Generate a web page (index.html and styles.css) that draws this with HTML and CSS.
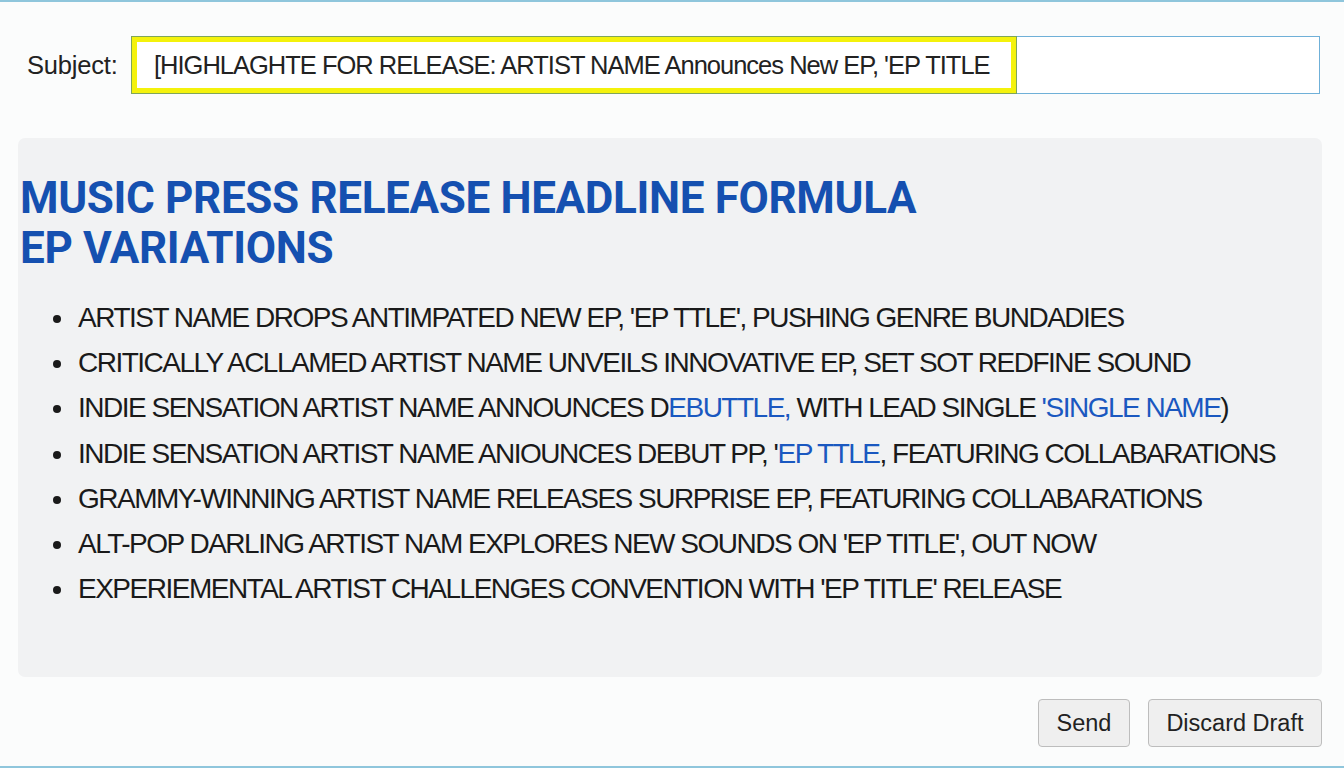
FILE: index.html
```html
<!DOCTYPE html>
<html lang="en">
<head>
<meta charset="utf-8">
<title>Compose</title>
<link rel="stylesheet" href="styles.css">
</head>
<body>
<div class="compose">
  <div class="subject-row">
    <label class="subject-label" for="subject">Subject:</label>
    <div class="subject-field" id="subject">
      <span class="subject-highlight">[HIGHLAGHTE FOR RELEASE: ARTIST NAME Announces New EP, 'EP TITLE</span>
    </div>
  </div>

  <section class="panel">
    <h1 class="panel-title">MUSIC PRESS RELEASE HEADLINE FORMULA<br>EP VARIATIONS</h1>
    <ul class="headline-list">
      <li>ARTIST NAME DROPS ANTIMPATED NEW EP, 'EP TTLE', PUSHING GENRE BUNDADIES</li>
      <li>CRITICALLY ACLLAMED ARTIST NAME UNVEILS INNOVATIVE EP, SET SOT REDFINE SOUND</li>
      <li>INDIE SENSATION ARTIST NAME ANNOUNCES D<span class="hl">EBUTTLE,</span> WITH LEAD SINGLE <span class="hl">'SINGLE NAME</span>)</li>
      <li>INDIE SENSATION ARTIST NAME ANIOUNCES DEBUT PP, '<span class="hl">EP TTLE</span>, FEATURING COLLABARATIONS</li>
      <li>GRAMMY-WINNING ARTIST NAME RELEASES SURPRISE EP, FEATURING COLLABARATIONS</li>
      <li>ALT-POP DARLING ARTIST NAM EXPLORES NEW SOUNDS ON 'EP TITLE', OUT NOW</li>
      <li>EXPERIEMENTAL ARTIST CHALLENGES CONVENTION WITH 'EP TITLE' RELEASE</li>
    </ul>
  </section>

  <div class="actions">
    <button class="btn" type="button">Send</button>
    <button class="btn" type="button">Discard Draft</button>
  </div>
</div>
</body>
</html>
```

FILE: styles.css
```css
html, body {
  margin: 0;
  padding: 0;
}

body {
  width: 1344px;
  height: 768px;
  box-sizing: border-box;
  background: #fbfcfc;
  border-top: 2px solid #8fc6dc;
  border-bottom: 2px solid #8fc6dc;
  font-family: "Liberation Sans", Arial, sans-serif;
  color: #1c1c1c;
  overflow: hidden;
}

.compose {
  display: flex;
  flex-direction: column;
  padding: 0 22px 0 18px;
}

.subject-row {
  display: flex;
  align-items: center;
  margin-top: 34px;
  padding-left: 9px;
}

.subject-label {
  font-family: "Liberation Sans", Arial, sans-serif;
  font-size: 25.5px;
  letter-spacing: -0.2px;
  color: #222;
  width: 104px;
}

.subject-field {
  flex: 1;
  height: 56px;
  border: 1px solid #6fb0d8;
  background: #fff;
  display: flex;
  align-items: stretch;
  margin-right: 2px;
}

.subject-highlight {
  display: flex;
  align-items: center;
  width: 884px;
  box-sizing: border-box;
  border: 5px solid #f4f20c;
  outline: 1px solid #7fa65a;
  padding-left: 17px;
  font-family: "Liberation Sans", Arial, sans-serif;
  font-size: 25.5px;
  letter-spacing: -1px;
  color: #222;
  white-space: nowrap;
}

.panel {
  margin-top: 44px;
  height: 539px;
  background: #f1f2f3;
  border-radius: 7px;
  padding: 35px 0 0 2px;
  box-sizing: border-box;
}

.panel-title {
  margin: 0;
  font-family: Roboto, "Liberation Sans", sans-serif;
  font-weight: 700;
  font-size: 44px;
  line-height: 50px;
  color: #1550b0;
  letter-spacing: -0.35px;
}

.headline-list {
  margin: 22px 0 0;
  padding: 0 0 0 56px;
  list-style: disc;
  font-family: "Liberation Sans", Arial, sans-serif;
  font-size: 28px;
  line-height: 45.2px;
  letter-spacing: -1.5px;
  color: #1a1a1a;
}

.headline-list li {
  padding-left: 2px;
}

.hl {
  color: #1a58c0;
}

.actions {
  display: flex;
  justify-content: flex-end;
  gap: 18px;
  margin-top: 22px;
}

.btn {
  height: 48px;
  padding: 0 17.5px;
  font-family: "Liberation Sans", Arial, sans-serif;
  font-size: 23.5px;
  color: #222;
  background: #efefef;
  border: 1px solid #bdbdbd;
  border-radius: 4px;
}
```
